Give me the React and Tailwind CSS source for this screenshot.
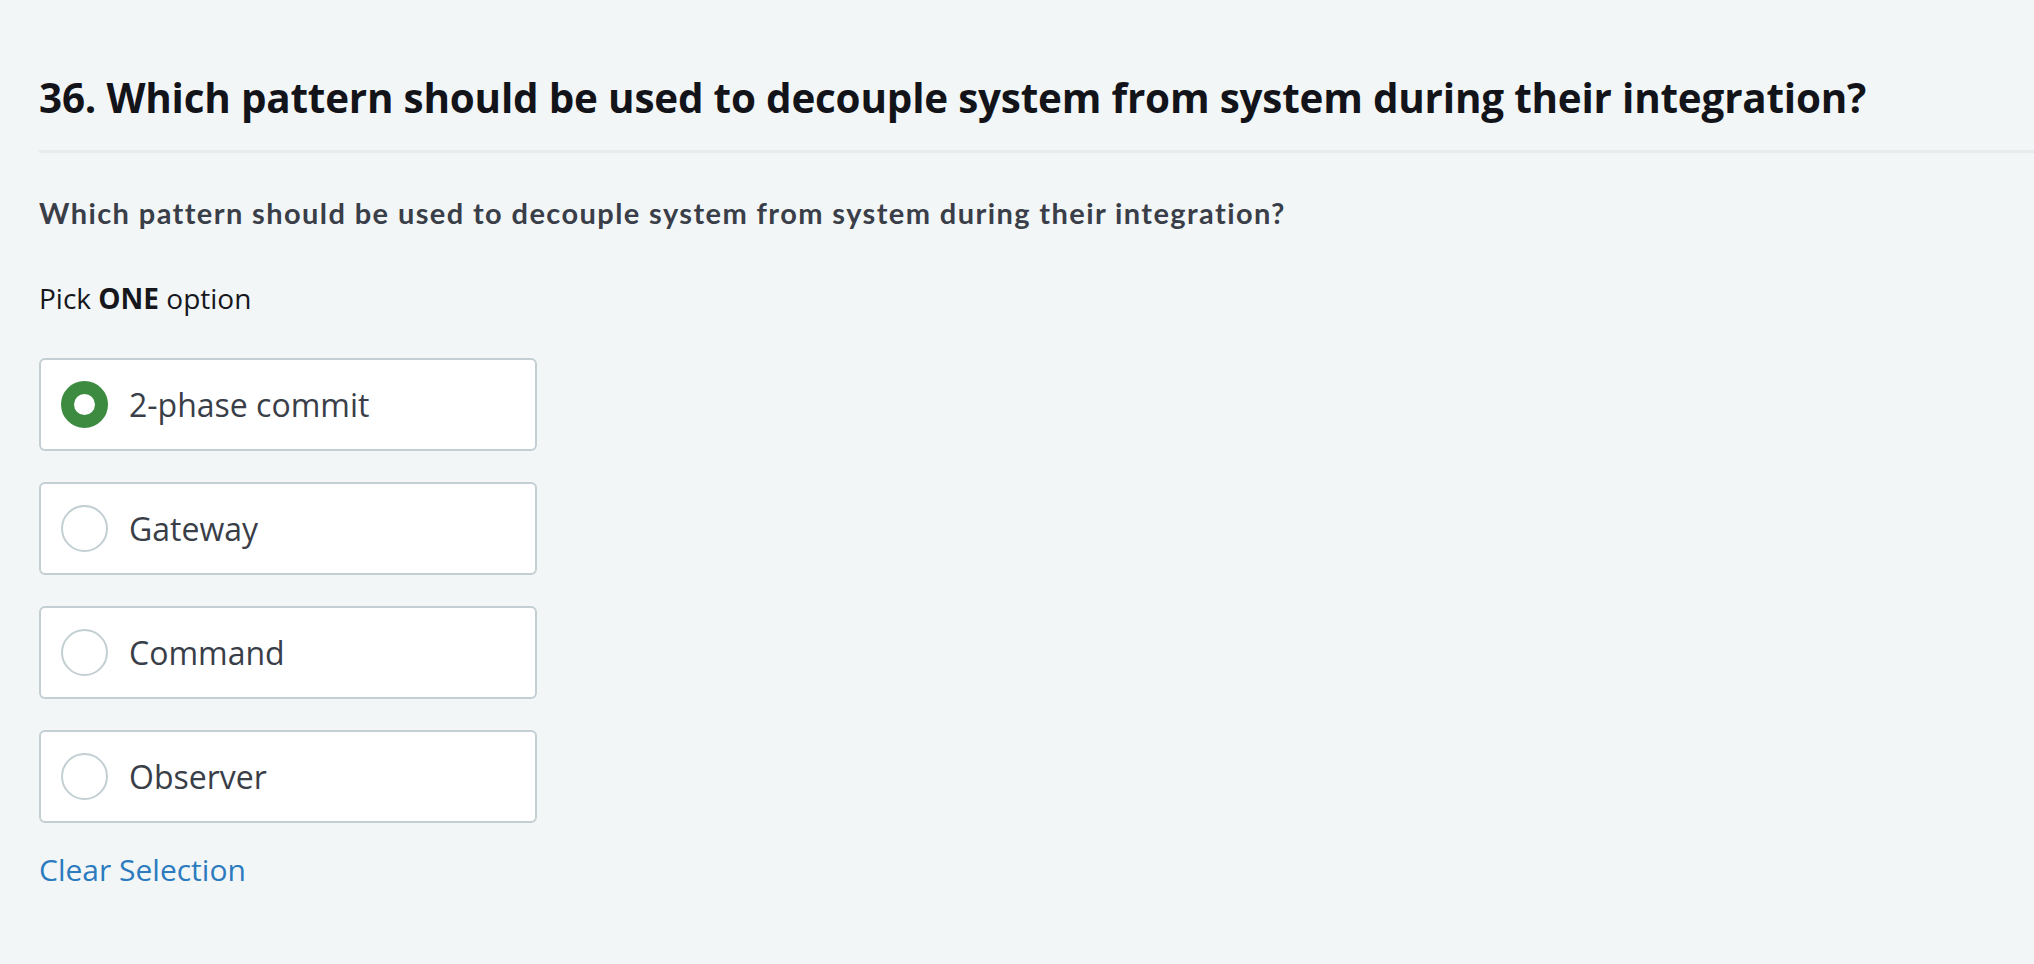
import { useState } from 'react';

const options = ['2-phase commit', 'Gateway', 'Command', 'Observer'];

export default function App() {
  const [selected, setSelected] = useState(0);

  return (
    <div
      className="min-h-screen bg-[#f3f6f7] pl-[39px] pt-[72px]"
      style={{ fontFamily: '"Open Sans", "Noto Sans", sans-serif' }}
    >
      {/* Question title */}
      <h1 className="text-[40.4px] font-bold leading-[52px] text-[#12141a] tracking-[-0.2px]">
        36. Which pattern should be used to decouple system from system during their integration?
      </h1>
      <div className="mt-[26px] h-[3px] bg-[#e7ebed]" />

      {/* Question body */}
      <p
        className="mt-[42px] text-[29px] font-bold leading-[36px] tracking-[1.4px] text-[#393e48]"
        style={{ fontFamily: 'Lato, "Open Sans", sans-serif' }}
      >
        Which pattern should be used to decouple system from system during their integration?
      </p>

      <p className="mt-[49px] text-[28px] leading-[36px] text-[#15171c]">
        Pick <span className="font-bold">ONE</span> option
      </p>

      {/* Options */}
      <div className="mt-[42px] flex flex-col gap-[31px]">
        {options.map((opt, i) => (
          <button
            key={opt}
            onClick={() => setSelected(i)}
            className="flex h-[93px] w-[498px] items-center rounded-[6px] border-2 border-[#c3cfd3] bg-white pl-[20px] text-left"
          >
            {selected === i ? (
              <span className="h-[47px] w-[47px] shrink-0 rounded-full border-[13px] border-[#3d8b40] bg-white" />
            ) : (
              <span className="h-[47px] w-[47px] shrink-0 rounded-full border-2 border-[#c3cfd3] bg-white" />
            )}
            <span className="ml-[21px] text-[32px] leading-[40px] text-[#393e48]">{opt}</span>
          </button>
        ))}
      </div>

      <button
        onClick={() => setSelected(null)}
        className="mt-[28px] text-[30px] leading-[38px] text-[#2c7bbf]"
      >
        Clear Selection
      </button>
    </div>
  );
}
